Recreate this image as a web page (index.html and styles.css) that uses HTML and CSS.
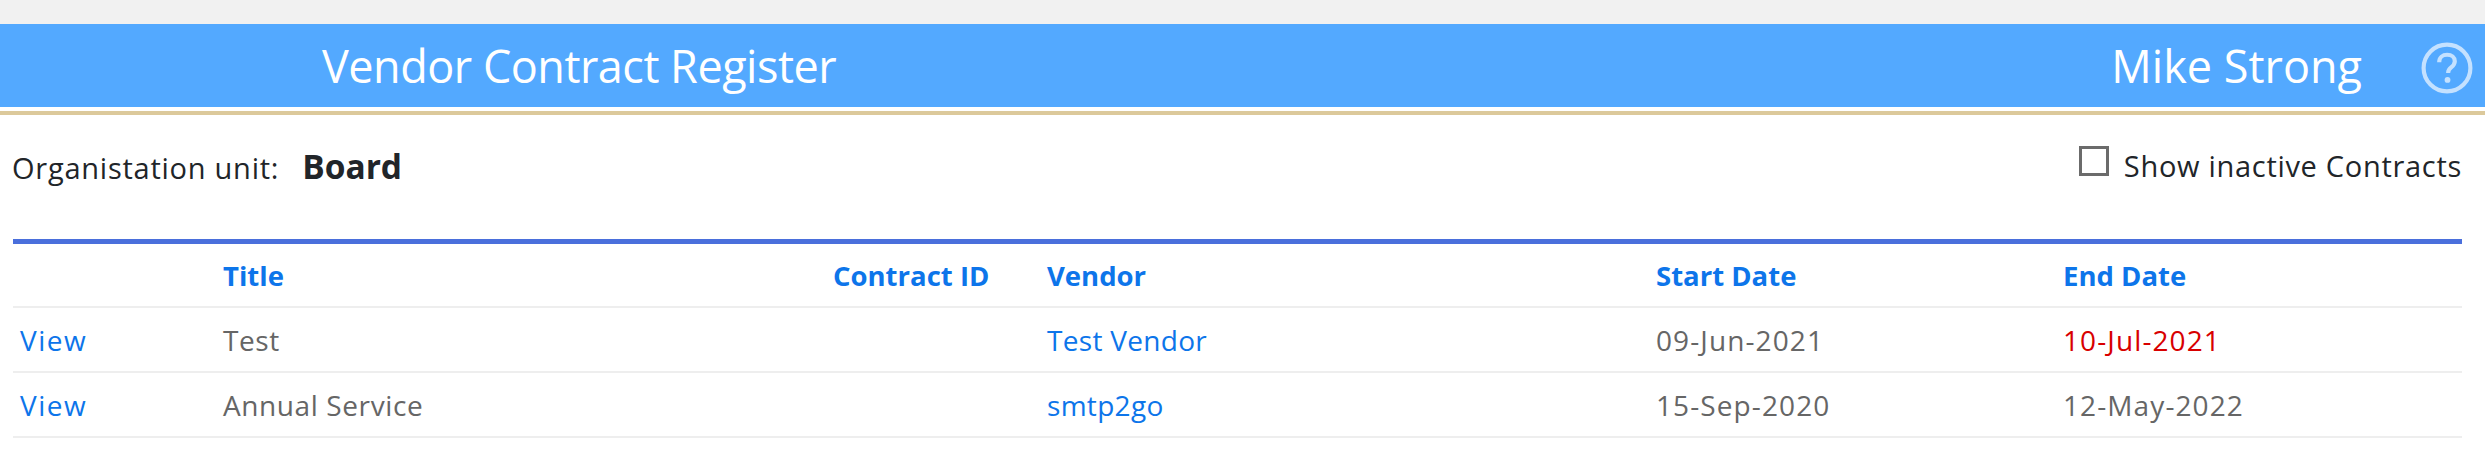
FILE: index.html
```html
<!DOCTYPE html>
<html lang="en">
<head>
  <meta charset="UTF-8" />
  <title>Vendor Contract Register</title>
  <link rel="stylesheet" href="styles.css">
</head>
<body>
  <div class="topstrip"></div>
  <header class="banner">
    <div class="app-title">Vendor Contract Register</div>
    <div class="user-name">Mike Strong</div>
    <svg class="help-icon" viewBox="0 0 50 50" width="52" height="52">
      <circle cx="25" cy="25" r="22.5" fill="none" stroke="#c4e1ff" stroke-width="4" />
      <path d="M17.5 19.5c0-4.6 3.300-7.200 7.600-7.200 4.400 0 7.400 2.600 7.400 6.300 0 2.900-1.600 4.400-3.500 5.900-1.900 1.500-2.900 2.500-2.900 5.200" fill="none" stroke="#c4e1ff" stroke-width="4" />
      <circle cx="25.500" cy="36.500" r="2.800" fill="#c4e1ff" />
    </svg>
  </header>
  <div class="banner-rule"></div>

  <div class="filter-row">
    <div class="org">
      <span class="org-label">Organistation unit:</span>
      <span class="org-name">Board</span>
    </div>
    <label class="inactive">
      <span class="checkbox"></span>
      <span class="inactive-text">Show inactive Contracts</span>
    </label>
  </div>

  <table class="contracts">
    <colgroup>
      <col class="col-view"><col class="col-title"><col class="col-id"><col class="col-vendor"><col class="col-start"><col class="col-end">
    </colgroup>
    <thead>
      <tr>
        <th></th>
        <th>Title</th>
        <th>Contract ID</th>
        <th>Vendor</th>
        <th>Start Date</th>
        <th>End Date</th>
      </tr>
    </thead>
    <tbody>
      <tr>
        <td><a class="view-link" href="#">View</a></td>
        <td class="title-cell">Test</td>
        <td></td>
        <td><a href="#">Test Vendor</a></td>
        <td class="date">09-Jun-2021</td>
        <td class="date expired">10-Jul-2021</td>
      </tr>
      <tr>
        <td><a class="view-link" href="#">View</a></td>
        <td class="title-cell">Annual Service</td>
        <td></td>
        <td><a href="#">smtp2go</a></td>
        <td class="date">15-Sep-2020</td>
        <td class="date">12-May-2022</td>
      </tr>
    </tbody>
  </table>
</body>
</html>
```

FILE: styles.css
```css
body {
  margin: 0;
  font-family: "Open Sans", "Noto Sans", sans-serif;
  background-color: #fff;
  color: #212529;
  overflow: hidden;
}
.topstrip {
  height: 24px;
  background-color: #f1f1f1;
}
.banner {
  display: flex;
  align-items: center;
  height: 83px;
  padding-left: 322px;
  background-color: #53a9ff;
  color: #fff;
}
.app-title {
  flex: 1;
  font-size: 45px;
  letter-spacing: -0.5px;
}
.user-name {
  font-size: 45px;
  margin-right: 59px;
}
.help-icon {
  margin-right: 12px;
  margin-top: 4px;
  filter: blur(0.6px);
}
.banner-rule {
  height: 4px;
  margin-top: 4px;
  background-color: #dcc99b;
}
.filter-row {
  display: flex;
  justify-content: space-between;
  height: 124px;
  padding: 28px 23px 0 12px;
  box-sizing: border-box;
}
.org {
  display: flex;
  align-items: baseline;
}
.org-label {
  font-size: 29px;
  letter-spacing: 0.75px;
  margin-right: 23px;
}
.org-name {
  font-size: 33.5px;
  font-weight: 700;
}
.inactive {
  display: flex;
  align-items: flex-start;
  font-size: 29px;
  letter-spacing: 0.7px;
}
.inactive-text {
  margin-top: 3px;
}
.checkbox {
  width: 30px;
  height: 30px;
  box-sizing: border-box;
  border: 3px solid #6b6b6b;
  margin: 3px 15px 0 0;
}
.contracts {
  width: 2449px;
  margin-left: 13px;
  border-collapse: collapse;
  table-layout: fixed;
  border-top: 5px solid #4a6fdc;
  font-size: 28px;
  letter-spacing: 0.3px;
}
.col-view { width: 210px; }
.col-title { width: 610px; }
.col-id { width: 214px; }
.col-vendor { width: 609px; }
.col-start { width: 407px; }
th {
  height: 62px;
  padding: 0;
  text-align: left;
  color: #0d75ea;
  font-size: 27.5px;
  letter-spacing: 0;
  font-weight: 700;
  border-bottom: 2px solid #eee;
}
td {
  height: 63px;
  padding: 0;
  color: #666;
  border-bottom: 2px solid #eee;
}
td:first-child {
  padding-left: 7px;
}
a {
  color: #0d75ea;
  text-decoration: none;
}
.view-link {
  letter-spacing: 1.5px;
}
.title-cell {
  letter-spacing: 0.6px;
}
.date {
  letter-spacing: 1.1px;
}
td.expired {
  color: #d80000;
}
```
